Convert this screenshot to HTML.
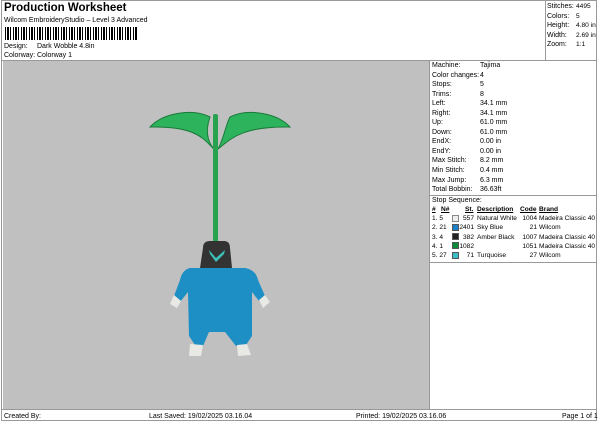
<!DOCTYPE html><html><head><style>
body{margin:0;width:600px;height:424px;background:#fff;font-family:"Liberation Sans",sans-serif;position:relative;overflow:hidden;color:#000}
.a{position:absolute;white-space:nowrap}
.s{font-size:7px;line-height:9.2px}
.t{font-size:6.6px}
</style></head><body>
<div class="a" style="left:1px;top:0;width:596px;height:421px;border:1px solid #999;box-sizing:border-box"></div>
<div class="a" style="left:4px;top:2px;font-size:11.5px;font-weight:bold">Production Worksheet</div>
<div class="a s" style="left:4px;top:16px">Wilcom EmbroideryStudio – Level 3 Advanced</div>
<div class="a" style="left:5px;top:27px;width:133px;height:13px;background:repeating-linear-gradient(90deg,#000 0 1px,#fff 1px 2px,#000 2px 4px,#fff 4px 5px,#000 5px 6px,#fff 6px 8px)"></div>
<div class="a s" style="left:4px;top:42px">Design:</div><div class="a s" style="left:37px;top:42px">Dark Wobble 4.8in</div>
<div class="a s" style="left:4px;top:51px">Colorway:</div><div class="a s" style="left:37px;top:51px">Colorway 1</div>
<div class="a" style="left:545px;top:0;width:1px;height:60px;background:#999"></div>
<div class="a s" style="left:547px;top:2px;line-height:9.6px">Stitches:<br>Colors:<br>Height:<br>Width:<br>Zoom:</div>
<div class="a s t" style="left:576px;top:2px;line-height:9.6px">4495<br>5<br>4.80 in<br>2.69 in<br>1:1</div>
<div class="a" style="left:1px;top:60px;width:596px;height:1px;background:#999"></div>
<div class="a" style="left:3px;top:61px;width:426px;height:348px;background:#c0c0c0"></div>
<div class="a" style="left:429px;top:61px;width:1px;height:348px;background:#999"></div>
<div class="a s" style="left:432px;top:61px;line-height:9.55px">Machine:<br>Color changes:<br>Stops:<br>Trims:<br>Left:<br>Right:<br>Up:<br>Down:<br>EndX:<br>EndY:<br>Max Stitch:<br>Min Stitch:<br>Max Jump:<br>Total Bobbin:</div>
<div class="a s" style="left:480px;top:61px;line-height:9.55px">Tajima<br>4<br>5<br>8<br>34.1 mm<br>34.1 mm<br>61.0 mm<br>61.0 mm<br>0.00 in<br>0.00 in<br>8.2 mm<br>0.4 mm<br>6.3 mm<br>36.63ft</div>
<div class="a" style="left:430px;top:195px;width:167px;height:1px;background:#999"></div>
<div class="a s" style="left:432px;top:196px">Stop Sequence:</div>
<div class="a s t" style="left:432px;top:205px;font-weight:bold;text-decoration:underline">#</div>
<div class="a s t" style="left:441px;top:205px;font-weight:bold;text-decoration:underline">N#</div>
<div class="a s t" style="left:465px;top:205px;font-weight:bold;text-decoration:underline">St.</div>
<div class="a s t" style="left:477px;top:205px;font-weight:bold;text-decoration:underline">Description</div>
<div class="a s t" style="left:520px;top:205px;font-weight:bold;text-decoration:underline">Code</div>
<div class="a s t" style="left:539px;top:205px;font-weight:bold;text-decoration:underline">Brand</div>
<div class="a s t" style="left:432px;top:214px;line-height:9.3px">1. 5<br>2. 21<br>3. 4<br>4. 1<br>5. 27</div>
<div class="a" style="left:452px;top:215px;width:5px;height:5px;border:1px solid #888;background:#eee"></div>
<div class="a" style="left:452px;top:224px;width:5px;height:5px;border:1px solid #555;background:#1a80c8"></div>
<div class="a" style="left:452px;top:233px;width:5px;height:5px;border:1px solid #555;background:#222"></div>
<div class="a" style="left:452px;top:242px;width:5px;height:5px;border:1px solid #555;background:#0a8a3a"></div>
<div class="a" style="left:452px;top:252px;width:5px;height:5px;border:1px solid #555;background:#3cbcc8"></div>
<div class="a s t" style="left:458px;top:214px;width:16px;text-align:right;line-height:9.3px">557<br>2401<br>382<br>1082<br>71</div>
<div class="a s t" style="left:477px;top:214px;line-height:9.3px">Natural White<br>Sky Blue<br>Amber Black<br>&nbsp;<br>Turquoise</div>
<div class="a s t" style="left:515px;top:214px;width:22px;text-align:right;line-height:9.3px">1004<br>21<br>1007<br>1051<br>27</div>
<div class="a s t" style="left:539px;top:214px;line-height:9.3px">Madeira Classic 40<br>Wilcom<br>Madeira Classic 40<br>Madeira Classic 40<br>Wilcom</div>
<div class="a" style="left:430px;top:262px;width:167px;height:1px;background:#999"></div>
<div class="a" style="left:1px;top:409px;width:596px;height:1px;background:#999"></div>
<div class="a s" style="left:4px;top:412px">Created By:</div>
<div class="a s" style="left:149px;top:412px">Last Saved: 19/02/2025 03.16.04</div>
<div class="a s" style="left:356px;top:412px">Printed: 19/02/2025 03.16.06</div>
<div class="a s" style="left:562px;top:412px">Page 1 of 1</div>
<svg class="a" style="left:0;top:0" width="600" height="424">
<path d="M150 127 C163 113 192 108 210 117 C206 128 206 140 214 149 C204 140 198 126 150 127Z" fill="#2db35c" stroke="#1a7a3a" stroke-width="1"/>
<path d="M290 127 C277 113 248 108 230 117 C226 124 224 138 218 149 C230 140 240 126 290 127Z" fill="#2db35c" stroke="#1a7a3a" stroke-width="1"/>
<rect x="213" y="114" width="5" height="132" rx="2" fill="#27a34f"/>
<path d="M203 248 Q203 241 210 241 L224 241 Q230 241 230 248 L232 268 L200 268Z" fill="#333"/>
<path d="M209 250 L216 258 L225 250 L224 254 L216 262 L210 254Z" fill="#3cc0b8"/>
<path d="M190 268 L245 268 Q256 270 258 280 L265 296 L259 301 L252 292 L252 336 L246 345 L236 346 L225 332 L209 332 L203 346 L195 345 L189 336 L188 292 L180 302 L174 296 L180 280 Q182 270 190 268Z" fill="#1d8fc4"/>
<path d="M174 295 L181 301 L177 308 L170 304Z" fill="#e8e8e4"/>
<path d="M259 300 L265 295 L270 302 L263 308Z" fill="#e8e8e4"/>
<path d="M190 344 L203 345 L201 356 L189 356 Z" fill="#e8e8e4"/>
<path d="M237 345 L247 344 L251 355 L238 356 Z" fill="#e8e8e4"/>
</svg>
</body></html>
